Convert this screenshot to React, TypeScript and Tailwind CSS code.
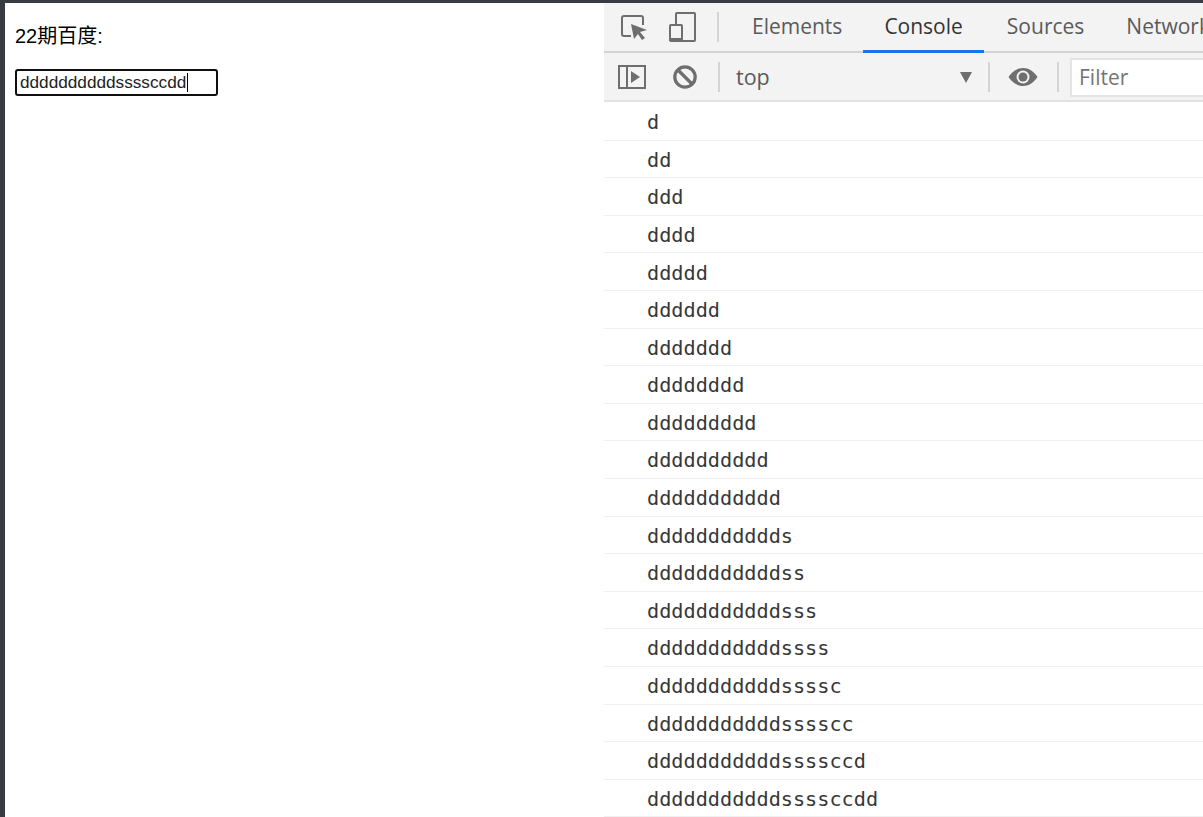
const logs = [
  'd',
  'dd',
  'ddd',
  'dddd',
  'ddddd',
  'dddddd',
  'ddddddd',
  'dddddddd',
  'ddddddddd',
  'dddddddddd',
  'ddddddddddd',
  'ddddddddddds',
  'dddddddddddss',
  'dddddddddddsss',
  'dddddddddddssss',
  'dddddddddddssssc',
  'dddddddddddsssscc',
  'dddddddddddssssccd',
  'dddddddddddssssccdd',
];

function Divider() {
  return <div className="h-[30px] w-[2px] shrink-0 bg-[#d4d4d4]" />;
}

export default function App() {
  return (
    <div className="flex h-[817px] w-[1203px] flex-col overflow-hidden bg-[#363c42]">
      <div className="flex min-h-0 flex-1 pl-[5px] pt-[3px]">
        {/* page side */}
        <div className="w-[599px] shrink-0 bg-white pl-[10px] pt-[21px] font-['Liberation_Sans','Noto_Sans_CJK_SC',sans-serif] text-black">
          <p className="h-[24px] text-[20px] leading-[24px]">22期百度:</p>
          <div className="relative mt-[21px] h-[27px] w-[203px] rounded-[3px] border-2 border-[#101010] pl-[3px] text-[17.2px] leading-[23px] text-[#222]">
            ddddddddddssssccdd
            <span className="absolute left-[170px] top-[2px] h-[19px] w-px bg-black" />
          </div>
        </div>

        {/* devtools */}
        <div className="flex min-w-0 flex-1 flex-col overflow-hidden bg-white">
          <div className="flex h-[50px] shrink-0 items-center border-b-2 border-[#d3d3d3] bg-[#f3f3f3] pl-[16px] font-['Open_Sans',sans-serif] text-[#5a5a5a]">
            <svg width="28" height="28" viewBox="0 0 28 28" fill="none" className="shrink-0">
              <path d="M11 23H4a2 2 0 0 1-2-2V5a2 2 0 0 1 2-2h17a2 2 0 0 1 2 2v7" stroke="#6e6e6e" strokeWidth="2" />
              <path d="M11 11l16 6-7 2 5 6-3 2-4-6-4 5z" fill="#6e6e6e" />
            </svg>
            <svg width="28" height="30" viewBox="0 0 28 30" fill="none" className="ml-[20px] shrink-0">
              <path d="M8 12V2a1 1 0 0 1 1-1h17a1 1 0 0 1 1 1v26a1 1 0 0 1-1 1H13" stroke="#6e6e6e" strokeWidth="2" />
              <rect x="2" y="13" width="12" height="16" rx="1" stroke="#6e6e6e" strokeWidth="2" />
              <rect x="1" y="26" width="14" height="3" fill="#6e6e6e" />
            </svg>
            <div className="ml-[21px]">
              <Divider />
            </div>
            <div className="ml-[12px] flex h-full shrink-0 text-[21px]">
              <span className="flex items-center px-[21px]">Elements</span>
              <span className="-mb-[2px] flex items-center border-b-[3px] border-[#1a73e8] px-[21px] pt-[1px] text-[#333]">Console</span>
              <span className="ml-[2px] flex items-center px-[21px]">Sources</span>
              <span className="flex items-center px-[21px]">Network</span>
            </div>
          </div>

          <div className="flex h-[49px] shrink-0 items-center border-b-2 border-[#e2e2e2] bg-[#f3f3f3] pl-[13px] pt-[1px] font-['Open_Sans',sans-serif] text-[#5a5a5a]">
            <svg width="30" height="26" viewBox="0 0 30 26" fill="none" className="shrink-0">
              <rect x="2" y="2" width="26" height="22" stroke="#6e6e6e" strokeWidth="2" />
              <path d="M10 2v22" stroke="#6e6e6e" strokeWidth="2" />
              <path d="M14 7l9 6-9 6z" fill="#6e6e6e" />
            </svg>
            <svg width="26" height="26" viewBox="0 0 26 26" fill="none" className="ml-[25px] shrink-0">
              <circle cx="13" cy="13" r="10.2" stroke="#6e6e6e" strokeWidth="3.2" />
              <path d="M6 6l14 14" stroke="#6e6e6e" strokeWidth="3.2" />
            </svg>
            <div className="ml-[20px]">
              <Divider />
            </div>
            <span className="ml-[16px] w-[224px] shrink-0 text-[21.5px]">top</span>
            <span className="h-0 w-0 shrink-0 border-x-[6.5px] border-t-[11px] border-x-transparent border-t-[#6e6e6e]" />
            <div className="ml-[16px]">
              <Divider />
            </div>
            <svg width="30" height="20" viewBox="0 0 30 20" className="ml-[18px] shrink-0">
              <path d="M15 1C8 1 3 6 0.5 10 3 14 8 19 15 19s12-5 14.500-9C27 6 22 1 15 1z" fill="#6e6e6e" />
              <circle cx="15" cy="10" r="6.5" fill="#f3f3f3" />
              <circle cx="15" cy="10" r="4.500" fill="#6e6e6e" />
            </svg>
            <div className="ml-[19px]">
              <Divider />
            </div>
            <div className="ml-[11px] flex h-[39px] w-[200px] shrink-0 items-center border-2 border-[#e4e4e4] bg-white pl-[7px] pt-[2px] text-[21px] text-[#757575]">
              Filter
            </div>
          </div>

          <div className="pt-[1px] font-['DejaVu_Sans_Mono',monospace] text-[20.22px] text-[#383838]">
            {logs.map((line, i) => (
              <div key={i} className="flex h-[37.6px] items-center border-b border-[#f0f0f0] pl-[43px] pt-[2px]">
                {line}
              </div>
            ))}
          </div>
        </div>
      </div>
    </div>
  );
}
